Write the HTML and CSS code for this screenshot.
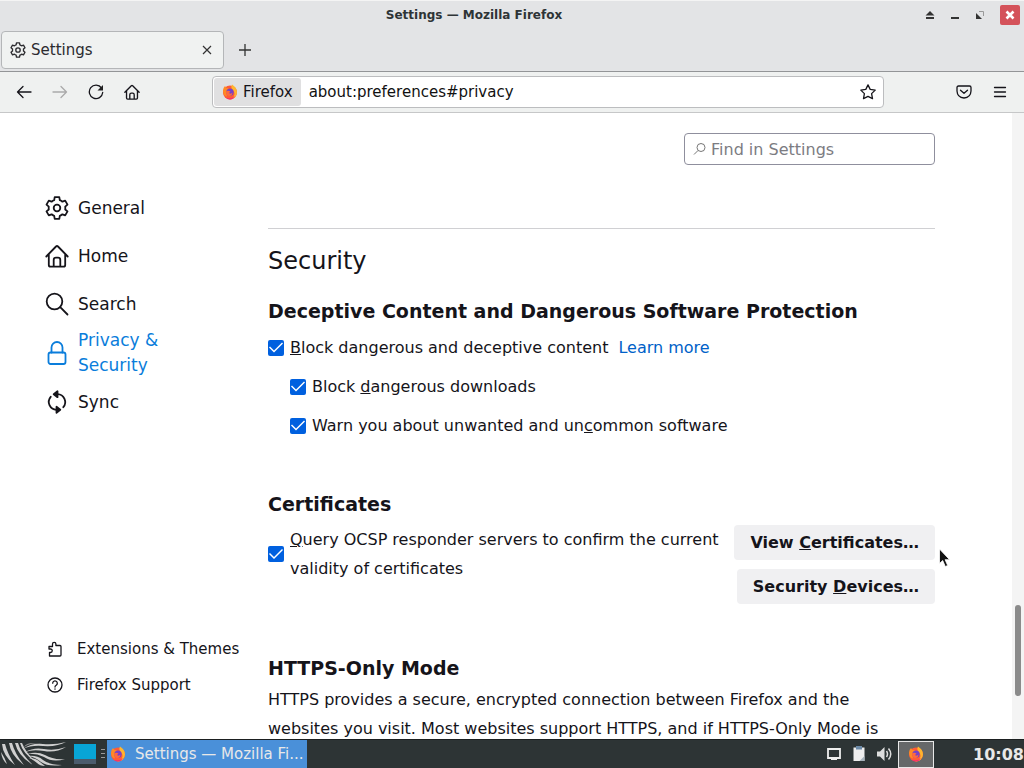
FILE: index.html
```html
<!DOCTYPE html>
<html lang="en">
<head>
  <meta charset="UTF-8">
  <meta name="viewport" content="width=device-width, initial-scale=1.0">
  <title>Settings — Mozilla Firefox</title>
  <link rel="stylesheet" href="styles.css">
</head>
<body>
  <!-- Shared icons -->
  <svg class="icon-defs" aria-hidden="true">
    <symbol id="icon-gear" viewBox="0 0 24 24">
      <path d="M9.7 1.2h4.6l.5 3q1.500 .6 2.600 1.500l2.800-1.100 2.300 4-2.300 2q.25 1.400 0 2.900l2.300 1.900-2.300 4-2.800-1.100q-1.200 1-2.600 1.500l-.5 3H9.700l-.5-3q-1.500-.6-2.600-1.500l-2.800 1.100-2.300-4 2.300-1.900q-.25-1.500 0-2.900l-2.300-2 2.300-4 2.800 1.100q1.200-1 2.600-1.500z"/>
      <circle cx="12" cy="12" r="3.300"/>
    </symbol>
    <symbol id="icon-home" viewBox="0 0 24 24">
      <path d="M1.300 12.500 11 2.500q1-.9 2 0l9.700 10M3.800 10.500V21q0 1.700 1.700 1.700h13q1.700 0 1.700-1.700V10.500M8.700 22.500V16q0-2.300 2.300-2.300h2q2.300 0 2.300 2.300v6.500"/>
    </symbol>
    <symbol id="icon-search" viewBox="0 0 24 24">
      <circle cx="9.500" cy="9.500" r="7.800"/>
      <path d="m15.200 15.200 7.300 7.300"/>
    </symbol>
    <symbol id="icon-firefox" viewBox="0 0 16 16">
      <circle cx="8" cy="8.500" r="7" fill="#ff5b36"/>
      <path d="M10 .5q5 3 5 8a7 7 0 0 1-8 6.800q5-.5 5.500-5 .2-3-2-4.500-2-2-.5-5.300z" fill="#ffb52e"/>
      <path d="M1 7Q.8 4 3 2l1.500 2L7 4.200 4 8l1 4.500Q1.500 12 1 7z" fill="#ff8a25"/>
      <path d="M2 12q5 5 11 0-2 3.500-5 3.500T2 12z" fill="#f5257c"/>
      <circle cx="8" cy="8.200" r="3.600" fill="#7542c8"/>
      <path d="M4 7.500q2-1.500 4.500 0L7 9q2 1.500 3.500-.5-.5 4-4 3.500Q4 11 4 7.500z" fill="#ff6a3c"/>
    </symbol>
  </svg>

  <header class="titlebar">
    <span class="window-title">Settings — Mozilla Firefox</span>
    <div class="window-buttons">
      <button type="button" aria-label="Roll up"><svg width="10" height="10" viewBox="0 0 10 10"><path d="M5 1 9.500 5.500h-9zM1 7h8v2H1z" fill="#333"/></svg></button>
      <button type="button" aria-label="Minimize"><svg width="10" height="10" viewBox="0 0 10 10"><path d="M1 7h8v2H1z" fill="#333"/></svg></button>
      <button type="button" aria-label="Maximize"><svg width="10" height="10" viewBox="0 0 10 10"><path d="M1 3v6h6z" fill="#333"/><path d="M4 1.500h4.500V6" fill="none" stroke="#999"/></svg></button>
      <button type="button" class="close-window" aria-label="Close"><svg width="20" height="20" viewBox="0 0 20 20"><path d="m6.500 6.500 7 7m0-7-7 7" stroke="#fff" stroke-width="2.600"/></svg></button>
    </div>
  </header>

  <div class="tabstrip">
    <div class="tab">
      <svg class="icon" width="16" height="16"><use href="#icon-gear"/></svg>
      <span class="tab-label">Settings</span>
      <button type="button" aria-label="Close tab"><svg width="10" height="10" viewBox="0 0 10 10"><path d="m1 1 8 8m0-8-8 8" stroke="#333" stroke-width="1.200"/></svg></button>
    </div>
    <button type="button" class="new-tab" aria-label="New tab"><svg width="12" height="12" viewBox="0 0 12 12"><path d="M6 0v12M0 6h12" stroke="#333" stroke-width="1.300"/></svg></button>
  </div>

  <nav class="toolbar">
    <div class="nav-buttons">
      <button type="button" aria-label="Back"><svg class="line" width="16" height="16" viewBox="0 0 16 16"><path d="M15 8H1.500M7 2.500 1.500 8 7 13.500"/></svg></button>
      <button type="button" aria-label="Forward" disabled><svg class="line" width="16" height="16" viewBox="0 0 16 16"><path d="M1 8h13.500M9 2.500 14.500 8 9 13.500"/></svg></button>
      <button type="button" aria-label="Reload"><svg class="line" width="16" height="16" viewBox="0 0 16 16"><path d="M13.500 4A6.700 6.700 0 1 0 14.700 8.500"/><path d="M15 1v5.500H9.500z" fill="#222" stroke="none"/></svg></button>
      <button type="button" aria-label="Home"><svg class="icon" width="16" height="16"><use href="#icon-home"/></svg></button>
    </div>
    <div class="urlbar">
      <span class="identity"><svg width="16" height="16"><use href="#icon-firefox"/></svg>Firefox</span>
      <input type="text" aria-label="Address" value="about:preferences#privacy">
      <button type="button" aria-label="Bookmark this page"><svg class="line" width="16" height="16" viewBox="0 0 16 16"><path d="m8 .9 2.200 4.500 5 .7-3.600 3.500.9 5L8 12.300l-4.500 2.300.9-5L.8 6.100l5-.7z"/></svg></button>
    </div>
    <div class="menu-buttons">
      <button type="button" aria-label="Save to Pocket"><svg class="line" width="16" height="16" viewBox="0 0 16 16"><path d="M2.500 2h11q1.500 0 1.500 1.500V7Q14.700 13.500 8 14 1.300 13.500 1 7V3.500Q1 2 2.500 2zM4.500 6.200 8 9.300l3.500-3.100"/></svg></button>
      <button type="button" aria-label="Open menu"><svg class="line" width="16" height="16" viewBox="0 0 16 16"><path d="M2.500 3.500h11M2.500 8h11M2.500 12.500h11"/></svg></button>
    </div>
  </nav>

  <div class="page">
    <aside class="sidebar">
      <nav class="categories">
        <a href="#general"><svg class="icon" width="24" height="24"><use href="#icon-gear"/></svg>General</a>
        <a href="#home"><svg class="icon" width="24" height="24"><use href="#icon-home"/></svg>Home</a>
        <a href="#search"><svg class="icon" width="24" height="24"><use href="#icon-search"/></svg>Search</a>
        <a href="#privacy" class="selected"><svg class="icon" width="24" height="24" viewBox="0 0 24 24"><rect x="3.500" y="11.500" width="17" height="11.500" rx="2"/><path d="M6.500 11.500V6.500a5.500 5.500 0 0 1 11 0v5"/></svg>Privacy &amp; Security</a>
        <a href="#sync"><svg class="icon" width="24" height="24" viewBox="0 0 24 24"><path d="M12.500 4.200a7.900 7.900 0 0 1 5.800 13M11.500 19.800a7.900 7.900 0 0 1-5.800-13"/><path d="M12.500 1.200v6L8.700 4.200zM11.500 16.800v6l3.800-3z" fill="currentColor"/></svg>Sync</a>
      </nav>
      <nav class="shortcuts">
        <a href="#addons"><svg class="line" width="16" height="16" viewBox="0 0 16 16"><path d="M2 5.500h3.500V3a1.700 1.700 0 0 1 3.400 0v1.500H13q1 0 1 1v8.500q0 1-1 1H2.500v-3.500h1a1.700 1.700 0 0 0 0-3.500H2z"/></svg>Extensions &amp; Themes</a>
        <a href="#support"><svg class="line" width="16" height="16" viewBox="0 0 16 16"><circle cx="8" cy="8" r="7"/><path d="M5.700 6.200a2.300 2.300 0 1 1 3.500 2Q8 9 8 10M8 11.800v.4"/></svg>Firefox Support</a>
      </nav>
    </aside>

    <main class="content">
      <label class="search-box">
        <svg width="14" height="14" viewBox="0 0 14 14"><circle cx="8" cy="5.500" r="4"/><path d="m5 8.500-4 4"/></svg>
        <input type="search" placeholder="Find in Settings" aria-label="Find in Settings">
      </label>

      <h1>Security</h1>

      <section class="protection">
        <h2>Deceptive Content and Dangerous Software Protection</h2>
        <div class="option">
          <input type="checkbox" id="blockContent" checked>
          <label for="blockContent"><u>B</u>lock dangerous and deceptive content</label>
          <a href="#learn-more">Learn more</a>
        </div>
        <div class="option indent">
          <input type="checkbox" id="blockDownloads" checked>
          <label for="blockDownloads">Block <u>d</u>angerous downloads</label>
        </div>
        <div class="option indent">
          <input type="checkbox" id="warnSoftware" checked>
          <label for="warnSoftware">Warn you about unwanted and un<u>c</u>ommon software</label>
        </div>
      </section>

      <section>
        <h2>Certificates</h2>
        <div class="certificate-row">
          <div class="option">
            <input type="checkbox" id="queryOcsp" checked>
            <label for="queryOcsp"><u>Q</u>uery OCSP responder servers to confirm the current validity of certificates</label>
          </div>
          <div class="certificate-buttons">
            <button type="button">View <u>C</u>ertificates…</button>
            <button type="button">Security <u>D</u>evices…</button>
          </div>
        </div>
      </section>

      <section>
        <h2>HTTPS-Only Mode</h2>
        <p>HTTPS provides a secure, encrypted connection between Firefox and the websites you visit. Most websites support HTTPS, and if HTTPS-Only Mode is</p>
      </section>
    </main>

    <div class="scrollbar"><div class="scroll-thumb"></div></div>
  </div>

  <footer class="taskbar">
    <!-- Start menu swirl -->
    <svg class="start-logo" width="68" height="26" viewBox="0 0 68 26" fill="#cfcfcf">
      <path d="M1 11q1 8 6 12-2-6-6-12zM2 3q1 12 13 21Q8 14 5 3zM9 2q2 13 15 22Q15 13 12 2zM15 2q3 13 18 22Q21 13 18 2zM20 2q3 11 16 19Q26 12 22 2z"/>
      <path d="M23 8q8-6 20-5 12 1 23-2-9 5-23 4-12-1-20 3zM25 11q9-5 19-3 11 2 22-2-10 6-22 4-11-2-19 1zM27 13q10-3 18 1 8 5 20 4-12 4-21-2-8-4-17-3zM28 15q9-1 15 4 6 5 19 5-14 2-21-3-6-5-13-6zM29 17q7 0 11 4l5 4q-5 0-8-3-4-4-8-5z"/>
      <path d="M24 6q2-4 9-4h10q-8 0-12 1-4 1-7 3z" fill="#8d8d8d"/>
    </svg>
    <div class="pager"></div>
    <div class="grip"></div>
    <button type="button" class="task"><svg width="16" height="16"><use href="#icon-firefox"/></svg>Settings — Mozilla Fi...</button>
    <div class="tray">
      <svg width="16" height="16" viewBox="0 0 16 16"><path d="M2 3h12v9H2z" fill="none" stroke="#eee" stroke-width="1.800"/><path d="M5 12h6v2H5z" fill="#eee"/></svg>
      <svg width="16" height="16" viewBox="0 0 16 16"><path d="M2.500 1.500h11v13.500h-11z" fill="#eee"/><path d="M5 0h6v3.500H5z" fill="#6c8aa8"/><path d="M13.500 10v5h-5z" fill="#a8b4bd"/></svg>
      <svg width="16" height="16" viewBox="0 0 16 16"><path d="M1 5.500h3L8.500 1v14L4 10.500H1z" fill="#ddd"/><path d="M10.500 5q2 3 0 6M12.500 2.500q4.500 5.500 0 11" fill="none" stroke="#ddd" stroke-width="1.500"/></svg>
    </div>
    <button type="button" class="tray-window" aria-label="Firefox"><svg width="16" height="16"><use href="#icon-firefox"/></svg></button>
    <span class="clock">10:08</span>
  </footer>

  <svg class="cursor" width="12" height="20" viewBox="0 0 12 20"><path d="M.5 1v14.500l3.200-3 2.600 6 2.400-1-2.600-5.800h4.500z" fill="#111" stroke="#fff" stroke-width=".8"/></svg>
</body>
</html>
```
FILE: styles.css
```css
* {
  box-sizing: border-box;
}
body {
  display: flex;
  flex-direction: column;
  height: 100vh;
  margin: 0;
  overflow: hidden;
  background-color: #fff;
  color: #15141a;
  font-family: "DejaVu Sans", sans-serif;
  font-size: 16px;
}
button {
  display: flex;
  align-items: center;
  justify-content: center;
  padding: 0;
  border: none;
  background: none;
  color: inherit;
  font-family: inherit;
}
a {
  color: inherit;
  text-decoration: none;
}
input {
  font-family: inherit;
}
svg {
  flex: none;
}
.icon-defs {
  position: absolute;
  width: 0;
  height: 0;
}
.icon,
.line {
  fill: none;
  stroke: currentColor;
  stroke-width: 2;
  stroke-linejoin: round;
  stroke-linecap: round;
}
.line {
  stroke-width: 1.3;
}

/* Window title */
.titlebar {
  display: grid;
  grid-template-columns: 1fr auto 1fr;
  align-items: center;
  height: 28px;
  padding: 0 4px 0 0;
  border-top: 1px solid #f4f4f4;
  background-color: #e3e4e6;
  color: #2e3436;
}
.window-title {
  grid-column: 2;
  margin-right: 72px;
  font-size: 12px;
  font-weight: bold;
}
.window-buttons {
  display: flex;
  grid-column: 3;
  align-items: center;
  justify-content: flex-end;
  gap: 15px;
}
.close-window {
  border-radius: 2px;
  background-color: #d4525a;
}

/* Tabs */
.tabstrip {
  display: flex;
  align-items: center;
  height: 44px;
  padding: 0 1px;
  border-bottom: 1px solid #939597;
  background-color: #e3e4e6;
  color: #2b2b2f;
}
.tab {
  display: flex;
  align-items: center;
  gap: 5px;
  width: 223px;
  height: 38px;
  padding: 0 11px 0 8px;
  border: 1px solid #b4b6b8;
  border-radius: 4px;
  background-color: #f0f2f1;
  font-size: 15px;
}
.tab-label {
  flex: 1;
}
.new-tab {
  margin-left: 15px;
}

/* Navigation toolbar */
.toolbar {
  display: flex;
  align-items: center;
  justify-content: space-between;
  height: 41px;
  padding: 0 16px;
  border-bottom: 1px solid #c6c7c8;
  background-color: #eff1f0;
}
.nav-buttons,
.menu-buttons {
  display: flex;
  gap: 20px;
}
.nav-buttons button:disabled {
  color: #aaa;
}
.urlbar {
  display: flex;
  flex: 1;
  align-items: center;
  height: 32px;
  margin: 0 72px;
  padding: 1px 7px 1px 1px;
  border: 1px solid #bcbdbf;
  border-radius: 4px;
  background-color: #fff;
  font-size: 15px;
}
.identity {
  display: flex;
  align-items: center;
  gap: 5px;
  height: 28px;
  padding: 0 8px;
  border-radius: 3px;
  background-color: #e0e0e1;
}
.urlbar input {
  flex: 1;
  min-width: 0;
  padding: 0 8px;
  border: none;
  outline: none;
  background: none;
  color: #111;
  font-size: 15px;
}

/* Preferences page */
.page {
  display: flex;
  flex: 1;
  min-height: 0;
  overflow: hidden;
}
.sidebar {
  display: flex;
  flex-direction: column;
  justify-content: space-between;
  width: 268px;
  padding: 71px 16px 36px 45px;
}
.categories a {
  display: flex;
  align-items: center;
  gap: 9px;
  width: 160px;
  min-height: 48px;
  font-size: 17px;
  line-height: 25px;
}
.categories .icon {
  stroke-width: 1.8;
}
.categories .selected {
  color: #0a7ddb;
}
.shortcuts a {
  display: flex;
  align-items: center;
  gap: 14px;
  height: 36px;
  padding-left: 2px;
  font-size: 15px;
}
.content {
  flex: 1;
  padding: 20px 77px 0 0;
}
.search-box {
  display: flex;
  align-items: center;
  gap: 4px;
  width: 251px;
  height: 32px;
  margin-left: auto;
  padding: 0 8px;
  border: 1px solid #8f8f9d;
  border-radius: 4px;
}
.search-box svg {
  fill: none;
  stroke: #777;
}
.search-box input {
  flex: 1;
  min-width: 0;
  padding: 0;
  border: none;
  outline: none;
  background: none;
  font-size: 16px;
}
.search-box input::placeholder {
  color: #7c7c82;
}
h1 {
  margin: 63px 0 0;
  padding-top: 16px;
  border-top: 1px solid #d0d0d3;
  font-size: 24px;
  font-weight: normal;
  line-height: 32px;
}
h2 {
  margin: 0;
  font-size: 19px;
  line-height: 24px;
}
section {
  margin-top: 52px;
}
.protection {
  margin-top: 22px;
}
.option {
  display: flex;
  align-items: center;
  gap: 6px;
  line-height: 29px;
}
.protection .option {
  margin-top: 10px;
}
.indent {
  margin-left: 22px;
}
.option a {
  margin-left: 4px;
  color: #0061c8;
}
.option input {
  display: grid;
  flex: none;
  width: 16px;
  height: 16px;
  margin: 0;
  border-radius: 2px;
  background-color: #0060df;
  appearance: none;
}
.option input:checked::after {
  background-color: #fff;
  clip-path: polygon(1px 8px, 2px 7px, 6px 11px, 14px 3px, 15px 4px, 6px 13px);
  content: "";
}
.certificate-row {
  display: flex;
  align-items: flex-start;
  justify-content: space-between;
  margin-top: 9px;
}
.certificate-buttons {
  display: flex;
  flex: none;
  flex-direction: column;
  align-items: flex-end;
  gap: 9px;
}
.certificate-buttons button {
  display: block;
  height: 35px;
  padding: 0 16px;
  border-radius: 4px;
  background-color: #f0f0f2;
  font-size: 16px;
  font-weight: bold;
}
p {
  max-width: 640px;
  margin: 5px 0 0;
  line-height: 29px;
}
.scrollbar {
  display: flex;
  align-items: flex-end;
  justify-content: center;
  width: 12px;
  padding-bottom: 43px;
  background-color: #f4f4f4;
}
.scroll-thumb {
  width: 6px;
  height: 91px;
  border-radius: 3px;
  background-color: #8b8b8b;
}

/* Desktop taskbar */
.taskbar {
  display: flex;
  flex: none;
  align-items: center;
  height: 29px;
  border-top: 1px solid #1b1f20;
  background-color: #2d3435;
  color: #e8e8e8;
}
.pager {
  width: 22px;
  height: 20px;
  margin-left: 6px;
  border-bottom: 5px solid #4b5b6c;
  background-color: #08a5d6;
}
.grip {
  width: 4px;
  height: 11px;
  margin: 0 2px 0 5px;
  background: repeating-linear-gradient(#999 0 1px, transparent 1px 4px);
}
.task {
  justify-content: flex-start;
  gap: 9px;
  width: 200px;
  height: 28px;
  padding-left: 3px;
  background-color: #4a90d9;
  font-size: 15px;
}
.tray {
  display: flex;
  gap: 9px;
  margin-left: auto;
}
.tray-window {
  width: 36px;
  height: 27px;
  margin: 0 39px 0 6px;
  border: 1px solid #e8e8e8;
  background-color: #666869;
}
.clock {
  font-size: 16px;
  font-weight: bold;
}

/* Mouse pointer */
.cursor {
  position: absolute;
  top: 548px;
  left: 939px;
}
```
